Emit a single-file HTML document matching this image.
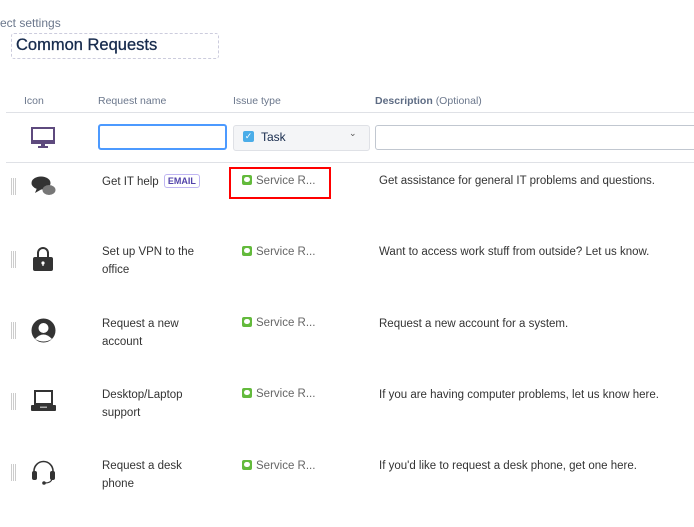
<!DOCTYPE html>
<html><head><style>
body{margin:0;width:694px;height:527px;background:#fff;font-family:"Liberation Sans",Arial,sans-serif;position:relative;overflow:hidden;color:#333}
.a{position:absolute;white-space:nowrap}
.h{font-size:10.5px;color:#6b778c;top:95px}
.t{font-size:11.5px;color:#333;line-height:18px}
.grip{position:absolute;width:6px;height:17px;background-image:linear-gradient(90deg,#ccc 1px,transparent 1px),linear-gradient(#fff 1px,transparent 1px);background-size:2px 2px}
.sr{position:absolute;font-size:11.5px;color:#666}
.sr i{display:inline-block;width:10px;height:10px;background:#63ba3c;border-radius:2px;vertical-align:-1px;margin-right:4px;position:relative}
.sr i:after{content:"";position:absolute;left:2px;top:2px;width:6px;height:5px;background:#fff;border-radius:3px}
</style></head><body>
<div class="a" style="left:0;top:16px;font-size:12px;color:#6b778c">ect settings</div>
<div class="a" style="left:11px;top:33px;width:206px;height:24px;border:1px dashed #ccd;border-radius:3px"></div>
<div class="a" style="left:16px;top:36px;font-size:16.5px;color:#172b4d;-webkit-text-stroke:0.3px #172b4d">Common Requests</div>
<div class="a h" style="left:24px">Icon</div>
<div class="a h" style="left:98px">Request name</div>
<div class="a h" style="left:233px">Issue type</div>
<div class="a h" style="left:375px;font-weight:bold;color:#5e6c84">Description <span style="font-weight:normal;color:#6b778c">(Optional)</span></div>
<div class="a" style="left:6px;top:112px;width:688px;height:1px;background:#dfe1e6"></div>
<svg class="a" style="left:31px;top:127px" width="24" height="22"><rect x="1" y="1" width="22" height="15" fill="none" stroke="#5e4a7e" stroke-width="2"/><rect x="2" y="13" width="20" height="3" fill="#5e4a7e"/><rect x="10" y="16" width="4" height="3" fill="#5e4a7e"/><rect x="7" y="19" width="10" height="2" fill="#5e4a7e"/></svg>
<div class="a" style="left:98px;top:124px;width:125px;height:22px;border:2px solid #4c9aff;border-radius:3px"></div>
<div class="a" style="left:233px;top:125px;width:135px;height:24px;background:#f4f5f7;border:1px solid #dfe1e6;border-radius:3px"></div>
<div class="a" style="left:243px;top:131px;width:11px;height:11px;background:#4bade8;border-radius:2px;color:#fff;font-size:9px;line-height:11px;text-align:center">✓</div>
<div class="a" style="left:261px;top:130px;font-size:12px;color:#172b4d">Task</div>
<div class="a" style="left:349px;top:128px;font-size:9px;color:#555">⌄</div>
<div class="a" style="left:375px;top:125px;width:330px;height:23px;border:1px solid #c1c7d0;border-radius:3px"></div>
<div class="a" style="left:6px;top:162px;width:688px;height:1px;background:#dfe1e6"></div>

<div class="grip" style="left:11px;top:178px"></div>
<svg class="a" style="left:31px;top:176px" width="25" height="22"><ellipse cx="10" cy="7" rx="9.5" ry="6.5" fill="#333"/><path d="M6 12 L4 17 L11 13Z" fill="#333"/><ellipse cx="18" cy="14" rx="6.5" ry="5" fill="#777"/></svg>
<div class="a t" style="left:102px;top:173px">Get IT help <span style="display:inline-block;border:1px solid #c0b6f2;border-radius:3px;color:#5243aa;font-size:9px;font-weight:bold;padding:0 3px;line-height:12px;vertical-align:1px;margin-left:2px">EMAIL</span></div>
<div class="a" style="left:229px;top:167px;width:98px;height:28px;border:2px solid #f00"></div>
<div class="sr" style="left:242px;top:175px"><i></i>Service R...</div>
<div class="a t" style="left:379px;top:172px">Get assistance for general IT problems and questions.</div>

<div class="grip" style="left:11px;top:251px"></div>
<svg class="a" style="left:32px;top:246px" width="22" height="26"><path d="M6 12 V7 a5 5 0 0 1 10 0 V12" fill="none" stroke="#333" stroke-width="2"/><rect x="1" y="11" width="20" height="14" rx="2" fill="#333"/><circle cx="11" cy="17" r="1.6" fill="#fff"/><rect x="10.4" y="17" width="1.2" height="3" fill="#fff"/></svg>
<div class="a t" style="left:102px;top:243px">Set up VPN to the<br>office</div>
<div class="sr" style="left:242px;top:246px"><i></i>Service R...</div>
<div class="a t" style="left:379px;top:243px">Want to access work stuff from outside? Let us know.</div>

<div class="grip" style="left:11px;top:322px"></div>
<svg class="a" style="left:31px;top:318px" width="25" height="25"><circle cx="12.5" cy="12.5" r="12" fill="#333"/><circle cx="12.5" cy="10" r="5" fill="#fff"/><path d="M4 21 Q12.5 12 21 21 Q12.5 26 4 21Z" fill="#fff"/></svg>
<div class="a t" style="left:102px;top:315px">Request a new<br>account</div>
<div class="sr" style="left:242px;top:317px"><i></i>Service R...</div>
<div class="a t" style="left:379px;top:315px">Request a new account for a system.</div>

<div class="grip" style="left:11px;top:393px"></div>
<svg class="a" style="left:31px;top:389px" width="25" height="23"><rect x="3" y="1" width="19" height="15" fill="#333"/><rect x="5" y="3" width="15" height="11" fill="#fff"/><rect x="0" y="16" width="25" height="6" rx="1" fill="#333"/><rect x="9" y="17.5" width="7" height="1.5" fill="#aaa"/></svg>
<div class="a t" style="left:102px;top:386px">Desktop/Laptop<br>support</div>
<div class="sr" style="left:242px;top:388px"><i></i>Service R...</div>
<div class="a t" style="left:379px;top:386px">If you are having computer problems, let us know here.</div>

<div class="grip" style="left:11px;top:464px"></div>
<svg class="a" style="left:31px;top:460px" width="25" height="25"><path d="M3 14 V11 a9.5 9.5 0 0 1 19 0 V14" fill="none" stroke="#333" stroke-width="1.6"/><rect x="1" y="11" width="5" height="9" rx="2" fill="#333"/><rect x="19" y="11" width="5" height="9" rx="2" fill="#333"/><path d="M21 19 Q20 23 14 23" fill="none" stroke="#333" stroke-width="1.2"/><circle cx="13" cy="23" r="1.8" fill="#333"/></svg>
<div class="a t" style="left:102px;top:457px">Request a desk<br>phone</div>
<div class="sr" style="left:242px;top:460px"><i></i>Service R...</div>
<div class="a t" style="left:379px;top:457px">If you'd like to request a desk phone, get one here.</div>
</body></html>
